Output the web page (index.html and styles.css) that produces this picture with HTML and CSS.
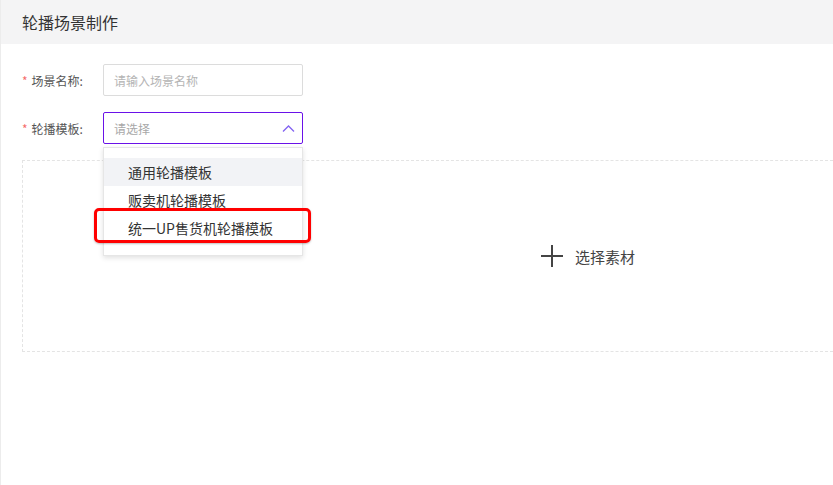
FILE: index.html
```html
<!DOCTYPE html>
<html lang="zh-CN">

<head>
    <meta charset="UTF-8">
    <meta name="viewport" content="width=device-width, initial-scale=1.0">
    <title>轮播场景制作</title>
    <link rel="stylesheet" href="styles.css">
</head>

<body>
<div class="page">
    <div class="page-head">轮播场景制作</div>

    <div class="form">
        <div class="form-row">
            <label class="form-label"><span class="req">*</span>场景名称:</label>
            <input class="input" type="text" placeholder="请输入场景名称">
        </div>

        <div class="form-row">
            <label class="form-label"><span class="req">*</span>轮播模板:</label>
            <div class="select">
                <div class="select-box">
                    <span class="placeholder">请选择</span>
                    <svg class="arrow" width="13" height="7" viewBox="0 0 13 7">
                        <path d="M1 6.5 L6.5 1 L12 6.5" fill="none" stroke="#8363f2" stroke-width="1.3"/>
                    </svg>
                </div>
                <ul class="dropdown">
                    <li class="hover">通用轮播模板</li>
                    <li>贩卖机轮播模板</li>
                    <li>统一UP售货机轮播模板</li>
                </ul>
                <div class="mark"></div>
            </div>
        </div>

        <div class="material">
            <span class="plus"></span>
            <span>选择素材</span>
        </div>
    </div>
</div>
</body>

</html>
```

FILE: styles.css
```css
html, body {
  margin: 0;
  padding: 0;
  overflow: hidden;
  background: #fff;
  font-family: "Noto Sans CJK SC", "Noto Sans", sans-serif;
}
.page {
  height: 485px;
  border-left: 1px solid #ececec;
}
.page-head {
  height: 44px;
  line-height: 44px;
  padding-left: 21px;
  background: #f4f4f5;
  font-size: 16px;
  color: #333;
}
.form {
  padding: 20px 0 0 21px;
}
.form-row {
  display: flex;
  align-items: center;
  height: 32px;
  margin-bottom: 16px;
}
.form-label {
  width: 81px;
  font-size: 12px;
  color: #555;
}
.req {
  color: #f56c6c;
  margin-right: 4px;
  font-size: 12px;
}
.input {
  box-sizing: border-box;
  width: 200px;
  height: 32px;
  margin: 0;
  padding: 0 10px;
  border: 1px solid #dcdcdc;
  border-radius: 2px;
  font-family: inherit;
  font-size: 12px;
  outline: none;
}
.input::placeholder {
  color: #b4b4b4;
}
.select {
  position: relative;
  width: 200px;
}
.select-box {
  box-sizing: border-box;
  height: 32px;
  padding: 0 7px 0 10px;
  border: 1px solid #6a12e8;
  border-radius: 2px;
  display: flex;
  align-items: center;
  justify-content: space-between;
}
.placeholder {
  font-size: 12px;
  color: #a8a8a8;
}
.dropdown {
  position: absolute;
  top: 35px;
  left: 0;
  z-index: 2;
  box-sizing: border-box;
  width: 200px;
  margin: 0;
  padding: 10px 0 13px;
  list-style: none;
  background: #fff;
  border: 1px solid #e6e6e6;
  box-shadow: 0 2px 5px rgba(0, 0, 0, 0.12);
}
.dropdown li {
  height: 28px;
  line-height: 28px;
  padding-left: 24px;
  font-size: 14px;
  color: #333;
}
.dropdown li.hover {
  background: #f2f3f6;
}
.mark {
  position: absolute;
  z-index: 3;
  top: 96px;
  left: -9px;
  width: 211px;
  height: 29px;
  border: 3px solid #f00;
  border-radius: 5px;
  box-shadow: 0 1px 2px rgba(0, 0, 0, 0.25);
}
.material {
  box-sizing: border-box;
  height: 192px;
  padding-left: 518px;
  border: 1px dashed #e4e4e4;
  border-right: none;
  display: flex;
  align-items: center;
  gap: 12px;
  font-size: 15px;
  color: #444;
}
.plus {
  position: relative;
  width: 22px;
  height: 22px;
}
.plus::before, .plus::after {
  content: "";
  position: absolute;
  background: #444;
}
.plus::before {
  left: 0;
  top: 10px;
  width: 22px;
  height: 2px;
}
.plus::after {
  left: 10px;
  top: 0;
  width: 2px;
  height: 22px;
}
```
